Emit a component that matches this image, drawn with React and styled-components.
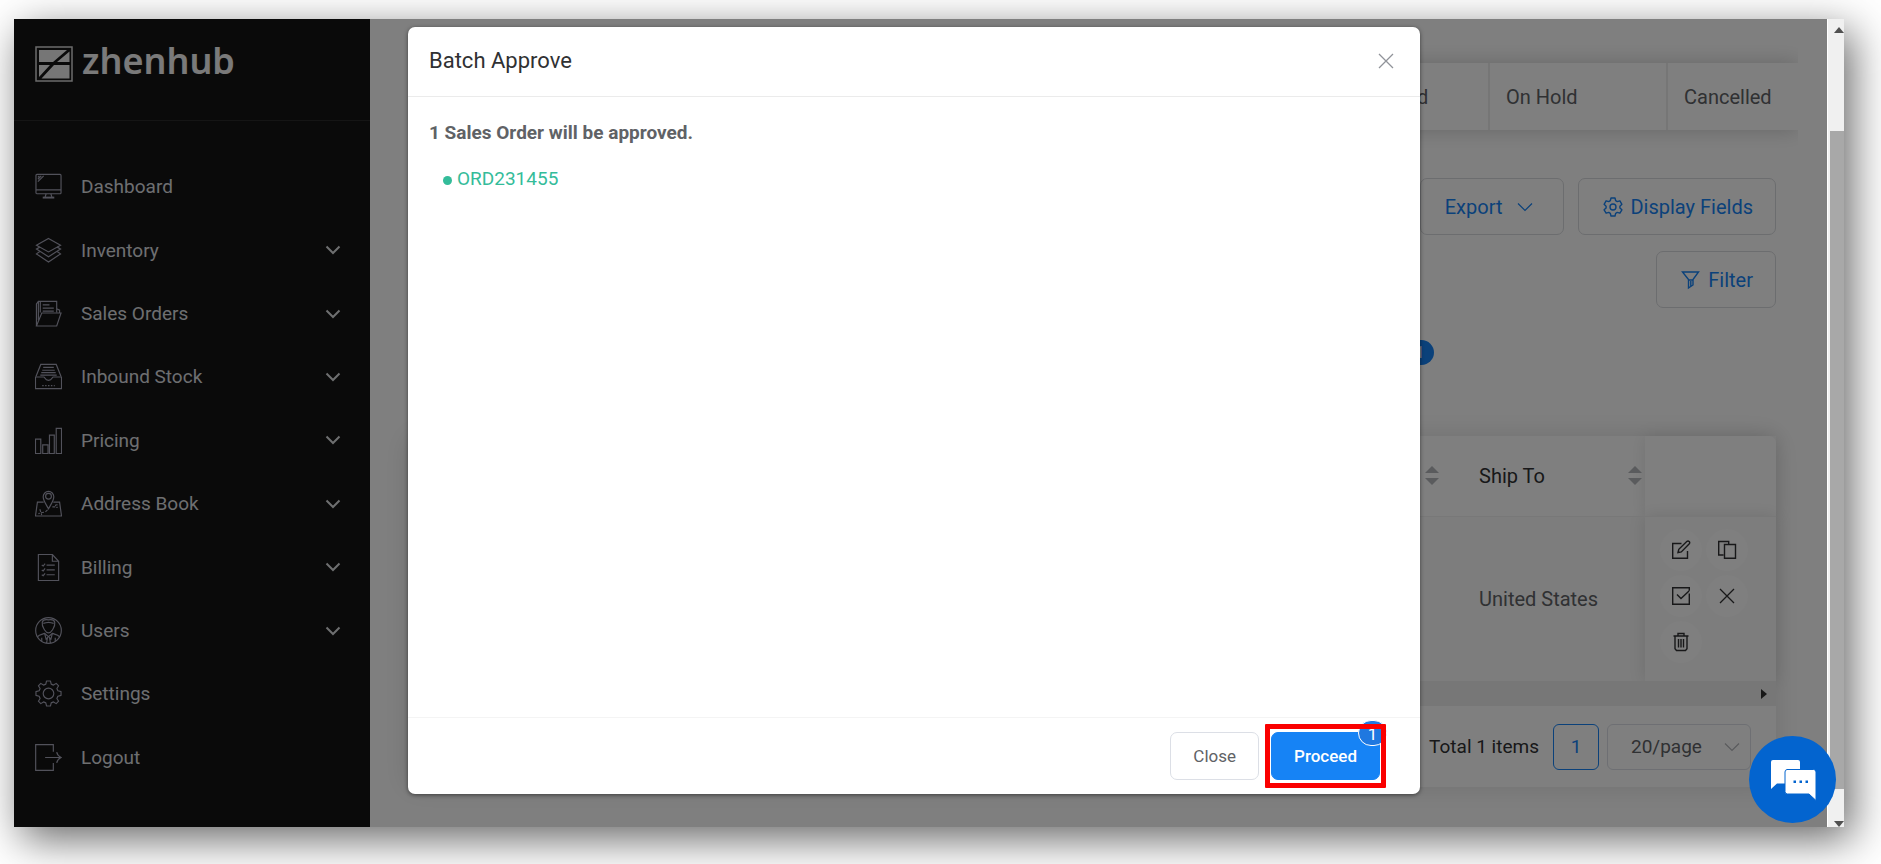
import React from "react";
import styled, { createGlobalStyle } from "styled-components";

const iconProps = {
  width: 27,
  height: 27,
  viewBox: "0 0 28 28",
  fill: "none",
  stroke: "currentColor",
  strokeWidth: 1.2,
  "aria-hidden": true,
};

const DashboardIcon = () => (
  <svg {...iconProps}>
    <rect x="1" y="1.5" width="26" height="20" rx="1" />
    <path d="M1 17.5h26M11.5 21.5l-1 3.5M16.5 21.5l1 3.5" />
    <path d="M3 9l6-6M3 6.5L6.500 3M3 4.500L4.500 3" />
    <path d="M8 25.500h12" strokeWidth="2" />
  </svg>
);

const InventoryIcon = () => (
  <svg {...iconProps}>
    <path d="M14 1.500L26.500 8.500 14 15.500 1.500 8.500z" />
    <path d="M5 10.500L1.500 12.500 14 20.500l12.500-8-3.500-2" />
    <path d="M5 15L1.500 17.500 14 26l12.500-8.500L23 15" />
  </svg>
);

const SalesIcon = () => (
  <svg {...iconProps}>
    <path d="M1.500 27L7 13.500h20L22.500 27z" />
    <path d="M5.500 13V1.500h17V13M22.500 9l3 1.500v3M1.500 27V4l2-2.500h2M3.500 2v19" />
    <path d="M8 5h7M8 8.500h11.500M8 11.500h11.500" />
  </svg>
);

const InboundIcon = () => (
  <svg {...iconProps}>
    <path d="M.5 14.500h8.500c1.500 0 1 3.500 5 3.500s3.500-3.500 5-3.500h8.500v12H.5z" />
    <path d="M1 14L6 1.500h16L27 14" />
    <path d="M8.500 4.500h11M7.500 7.500h13M6.500 10h15M5.500 12.500h17" />
    <path d="M7.500 23.500h13" strokeDasharray="1.500 1.500" />
  </svg>
);

const PricingIcon = () => (
  <svg {...iconProps}>
    <path d="M.5 12.500H6v15H.5zM8 18.500h5.500v9H8zM15 8.500h5v19h-5zM22 1.500h5.500v26H22z" />
  </svg>
);

const AddressIcon = () => (
  <svg {...iconProps}>
    <path d="M14 19.500C11 14 8.500 11 8.500 7a5.500 5.500 0 0 1 11 0c0 4-2.500 7-5.500 12.500z" />
    <circle cx="14" cy="6.500" r="3" />
    <path d="M9 12.500H2.500L.5 27h27l-2-14.500H19" />
    <path d="M23.500 15.500c-3-1-3 3 0 2.500M18 17.500h3M13 20.500c-3 4-6 2-7.500 3.500l-2 .5M5 20l2 6" strokeDasharray="3 1.500" />
  </svg>
);

const BillingIcon = () => (
  <svg {...iconProps}>
    <path d="M3.500.5H18l6.500 7v20h-21zM18 .5v7h6.500" />
    <path d="M12 11.500h8.500M12 16.500h8.500M12 21.500h8.500M7 11.500l1.500 1L10.500 10M7 16.500l1.500 1 2-2.500M7 21.500l1.500 1 2-2.500" />
  </svg>
);

const UsersIcon = () => (
  <svg {...iconProps}>
    <circle cx="14" cy="14" r="13.300" />
    <path d="M7.500 5.500C8 3 11 2.500 14 3c3-.5 6 0 6.500 2.500.5 4.500-1.500 6-2.500 8-1.500 2.500-2 3-4 3s-2.500-.5-4-3c-1-2-3-3.500-2.500-8z" />
    <path d="M8.500 6.500c2 0 3.500-1 5.500-1s3.500 1 5.500 1M2.500 20.500c2-2.500 5-2.500 7.500-3.500l4 3.500 4-3.500c2.500 1 5.500 1 7.500 3.500" />
    <path d="M10 17l1.500 6 2-2M18 17l-1.500 6-2-2M13 21l-1 6M15 21l1 6M7 21.500V25M21 21.500V25" />
  </svg>
);

const SettingsIcon = () => (
  <svg {...iconProps}>
    <circle cx="14" cy="14" r="5.500" />
    <path d="M12 1h4l.8 3.300 2.400 1L22 3.500 24.500 6l-1.800 2.800 1 2.400L27 12v4l-3.300.8-1 2.400 1.800 2.800-2.500 2.500-2.800-1.800-2.400 1L16 27h-4l-.8-3.300-2.400-1L6 24.500 3.500 22l1.800-2.800-1-2.400L1 16v-4l3.300-.8 1-2.400L3.500 6 6 3.500l2.800 1.800 2.400-1z" strokeLinejoin="round" />
  </svg>
);

const LogoutIcon = () => (
  <svg {...iconProps}>
    <path d="M19 8V.7H.7v26.600H19v-7.500M10.500 14H27M22.500 8.500C23 11.500 25 13 27 14c-2 1-4 2.500-4.500 5.500" />
  </svg>
);

const Chevron = () => (
  <svg width="16" height="16" viewBox="0 0 16 16" fill="none" stroke="currentColor" strokeWidth="2" aria-hidden>
    <path d="M1.500 4.500L8 11l6.500-6.500" />
  </svg>
);

const ThinChevron = () => (
  <svg width="16" height="16" viewBox="0 0 16 16" fill="none" stroke="currentColor" strokeWidth="1.200" aria-hidden>
    <path d="M1 4.500l7 7 7-7" />
  </svg>
);

const CrossIcon = () => (
  <svg width="16" height="16" viewBox="0 0 16 16" fill="none" stroke="currentColor" strokeWidth="1.300" aria-hidden>
    <path d="M1 1l14 14M15 1L1 15" />
  </svg>
);

const toolProps = {
  width: 20,
  height: 20,
  viewBox: "0 0 20 20",
  fill: "none",
  stroke: "currentColor",
  strokeWidth: 1.4,
  "aria-hidden": true,
};

const GearIcon = () => (
  <svg {...toolProps}>
    <circle cx="10" cy="10" r="3" />
    <path d="M8 1h4l.7 2.700 1.500.9 2.700-.8 2 3.500-2 1.900v1.700l2 1.900-2 3.400-2.700-.8-1.500.9L12 19H8l-.7-2.700-1.500-.9-2.700.8-2-3.400 2-1.900V9.200l-2-1.900 2-3.500 2.700.8 1.500-.9z" strokeLinejoin="round" />
  </svg>
);

const FilterIcon = () => (
  <svg {...toolProps}>
    <path d="M1.500 2h16L12 9.500V15l-4.500 3V9.500zM7.500 10h4.500M9.800 11v5" />
  </svg>
);

const EditIcon = () => (
  <svg {...toolProps}>
    <path d="M10.500 3.500H1.700v14.800h14.800V11" />
    <path d="M7 12.500l.8-3.200 8.200-8c1.500-1 3.500.8 2.300 2.400l-8 8.200z" />
  </svg>
);

const CopyIcon = () => (
  <svg {...toolProps}>
    <path d="M6.500 15H1.700V1.500h10V4M7.500 4.500h11v13.800h-11z" />
  </svg>
);

const ApproveIcon = () => (
  <svg {...toolProps}>
    <path d="M18.300 7.500v10.800H1.700V1.700h16.600v3M6 8.500l4 4 8-7.500" />
  </svg>
);

const TrashIcon = () => (
  <svg {...toolProps}>
    <path d="M2.500 4h15M7 3.500v-2h6v2M4 4.500v12.300l1.500 1.700h9l1.500-1.700V4.500M7.500 7v8.500M10 7v8.500M12.500 7v8.500" />
  </svg>
);

const LogoMark = () => (
  <svg width="38" height="36" viewBox="0 0 38 36" aria-hidden>
    <rect x="1" y="1" width="36" height="34" fill="none" stroke="#d8d8d8" strokeWidth="1.500" />
    <path d="M4 4h28L18 16H4zM34.500 5.500V16H22zM4 19h11L4 31zM19 19h15.500v13.500H6.500z" fill="#ececec" />
  </svg>
);

const ChatIcon = () => (
  <svg width="46" height="42" viewBox="0 0 46 42" aria-hidden>
    <path d="M3 1h25a2 2 0 0 1 2 2v21.500H7L1 30V3a2 2 0 0 1 2-2z" fill="#fff" />
    <path d="M17 10.500h26.500a2.500 2.500 0 0 1 2.500 2.500v28.500l-7-6.500H17.500a2.500 2.500 0 0 1-2.500-2.500V13a2.500 2.500 0 0 1 2-2.500z" fill="#fff" stroke="#0364cf" />
    <path d="M23.500 21.500h2.500v2.500h-2.500zM29.500 21.500H32v2.500h-2.500zM35.500 21.500H38v2.500h-2.500z" fill="#0364cf" />
  </svg>
);

const menu = [
  { label: "Dashboard", Icon: DashboardIcon },
  { label: "Inventory", Icon: InventoryIcon, nested: true },
  { label: "Sales Orders", Icon: SalesIcon, nested: true },
  { label: "Inbound Stock", Icon: InboundIcon, nested: true },
  { label: "Pricing", Icon: PricingIcon, nested: true },
  { label: "Address Book", Icon: AddressIcon, nested: true },
  { label: "Billing", Icon: BillingIcon, nested: true },
  { label: "Users", Icon: UsersIcon, nested: true },
  { label: "Settings", Icon: SettingsIcon },
  { label: "Logout", Icon: LogoutIcon },
];

const actions = [
  { label: "Edit", Icon: EditIcon },
  { label: "Copy", Icon: CopyIcon },
  { label: "Approve", Icon: ApproveIcon },
  { label: "Cancel", Icon: CrossIcon },
  { label: "Delete", Icon: TrashIcon },
];

const SideMenu = () => (
  <StyledSidebar>
    <StyledLogo>
      <LogoMark />
      <span>zhenhub</span>
    </StyledLogo>
    <StyledNav>
      {menu.map(({ label, Icon, nested }) => (
        <StyledNavItem key={label} href="#">
          <Icon />
          <span>{label}</span>
          {nested && <Chevron />}
        </StyledNavItem>
      ))}
    </StyledNav>
  </StyledSidebar>
);

const OrdersTable = () => (
  <StyledCard>
    <StyledTable>
      <thead>
        <tr>
          <StyledTh>
            <StyledSort>
              <span />
              <StyledCarets />
            </StyledSort>
          </StyledTh>
          <StyledTh $width={203}>
            <StyledSort>
              Ship To
              <StyledCarets />
            </StyledSort>
          </StyledTh>
          <StyledTh $width={131} $fixed />
        </tr>
      </thead>
      <tbody>
        <tr>
          <StyledTd />
          <StyledTd>United States</StyledTd>
          <StyledTd $fixed>
            <StyledActions>
              {actions.map(({ label, Icon }) => (
                <button key={label} type="button" aria-label={label}>
                  <Icon />
                </button>
              ))}
            </StyledActions>
          </StyledTd>
        </tr>
      </tbody>
    </StyledTable>
    <StyledTrack>
      <StyledArrow $dir="right" />
    </StyledTrack>
    <StyledPagination>
      <span>Total 1 items</span>
      <StyledPage type="button">1</StyledPage>
      <StyledSelect>
        <select aria-label="Page size" defaultValue="20">
          <option value="20">20/page</option>
        </select>
        <ThinChevron />
      </StyledSelect>
    </StyledPagination>
  </StyledCard>
);

const BatchApproveModal = () => (
  <StyledModal role="dialog" aria-labelledby="modal-title">
    <StyledModalHeader>
      <h2 id="modal-title">Batch Approve</h2>
      <button type="button" aria-label="Close dialog">
        <CrossIcon />
      </button>
    </StyledModalHeader>
    <StyledModalBody>
      <strong>1 Sales Order will be approved.</strong>
      <ul>
        <li>
          <a href="#">ORD231455</a>
        </li>
      </ul>
    </StyledModalBody>
    <StyledModalFooter>
      <StyledButton type="button">Close</StyledButton>
      <StyledHighlight>
        <StyledButton type="button" $primary>
          Proceed
        </StyledButton>
        <StyledCount>1</StyledCount>
      </StyledHighlight>
    </StyledModalFooter>
  </StyledModal>
);

const App = () => {
  return (
    <StyledRoot>
      <GlobalStyle />
      <StyledWindow>
        <SideMenu />
        <StyledMain>
          <StyledTabs>
            <a href="#">Dispatched</a>
            <a href="#">On Hold</a>
            <a href="#">Cancelled</a>
          </StyledTabs>
          <StyledToolbar>
            <StyledTool type="button">
              <span>Export</span>
              <ThinChevron />
            </StyledTool>
            <StyledTool type="button">
              <GearIcon />
              <span>Display Fields</span>
            </StyledTool>
          </StyledToolbar>
          <StyledToolbar>
            <StyledTool type="button">
              <FilterIcon />
              <span>Filter</span>
            </StyledTool>
          </StyledToolbar>
          <StyledSelection>
            <span>1</span>
          </StyledSelection>
          <OrdersTable />
        </StyledMain>
        <StyledMask>
          <BatchApproveModal />
        </StyledMask>
        <StyledScrollbar>
          <StyledArrow $dir="up" />
          <StyledThumb />
          <StyledArrow $dir="down" />
        </StyledScrollbar>
        <StyledChat type="button" aria-label="Open chat">
          <ChatIcon />
        </StyledChat>
      </StyledWindow>
    </StyledRoot>
  );
};

export default App;

const GlobalStyle = createGlobalStyle`
  *, *::before, *::after {
    box-sizing: border-box;
  }

  body {
    margin: 0;
    background-color: #ffffff;
    font-family: Roboto, "Liberation Sans", sans-serif;
    font-size: 20px;
    color: #303133;
  }

  a {
    color: inherit;
    text-decoration: none;
  }

  button, select {
    padding: 0;
    border: 0;
    background: none;
    font: inherit;
    color: inherit;
    cursor: pointer;
  }

  svg {
    flex: none;
  }
`;

const StyledRoot = styled.div`
  display: flex;
  min-height: 100vh;
  padding: 19px 37px 37px 14px;
  overflow: hidden;
`;

const StyledWindow = styled.div`
  position: relative;
  flex: 1;
  display: flex;
  min-width: 0;
  background-color: #ffffff;
  box-shadow: 8px 12px 40px rgba(0, 0, 0, 0.6);
`;

const StyledSidebar = styled.aside`
  flex: none;
  display: flex;
  flex-direction: column;
  width: 356px;
  background-color: #141414;
  color: #dcdee0;
  font-size: 19px;
`;

const StyledLogo = styled.div`
  display: flex;
  align-items: flex-start;
  gap: 9px;
  height: 102px;
  padding: 27px 21px 0;
  border-bottom: 1px solid #2a2a2a;
  color: #f4f4f4;

  & > span {
    font-family: "Noto Sans", sans-serif;
    font-size: 36px;
    font-weight: 600;
    line-height: 30px;
  }
`;

const StyledNav = styled.nav`
  flex: 1;
  display: flex;
  flex-direction: column;
  padding: 34px 29px 38px 21px;
`;

const StyledNavItem = styled.a`
  flex: 1;
  display: flex;
  align-items: center;
  gap: 19px;

  & > svg:first-child {
    color: #a4a4b6;
  }

  & > span {
    flex: 1;
  }
`;

const StyledMain = styled.main`
  flex: 1;
  display: flex;
  flex-direction: column;
  min-width: 0;
  padding: 44px 51px 0 38px;
`;

const StyledTabs = styled.div`
  display: flex;
  justify-content: flex-end;
  margin: 0 -22px 48px 0;
  box-shadow: 0 0 20px rgba(0, 0, 0, 0.2);
  clip-path: inset(-24px 0);
  color: #606266;

  & > a {
    width: 178px;
    height: 67px;
    padding-left: 16px;
    border-left: 2px solid #ececec;
    line-height: 68px;
  }

  & > a:last-child {
    width: 132px;
  }
`;

const StyledToolbar = styled.div`
  display: flex;
  justify-content: flex-end;
  gap: 14px;
  margin-bottom: 16px;
`;

const StyledTool = styled.button`
  display: flex;
  align-items: center;
  gap: 7px;
  height: 57px;
  padding: 0 22px 0 24px;
  border: 1px solid #d8dade;
  border-radius: 7px;
  color: #1683f5;

  & > svg:last-child {
    margin: 0 8px;
  }
`;

const StyledSelection = styled.div`
  display: flex;
  justify-content: flex-end;
  padding: 16px 342px 71px 0;

  & > span {
    width: 28px;
    height: 25px;
    border-radius: 13px;
    background-color: #1683f5;
    color: #ffffff;
    font-size: 16px;
    line-height: 25px;
    text-align: center;
  }
`;

const StyledCard = styled.section`
  border-radius: 7px 7px 0 0;
  box-shadow: 0 0 28px rgba(0, 0, 0, 0.12);
`;

const StyledTable = styled.table`
  width: 100%;
  table-layout: fixed;
  border-collapse: collapse;
`;

const StyledTh = styled.th`
  width: ${({ $width }) => ($width ? `${$width}px` : "auto")};
  height: 80px;
  padding: 0 3px 0 37px;
  border-bottom: 1px solid #f0f0f0;
  box-shadow: ${({ $fixed }) => ($fixed ? "0 0 16px rgba(0, 0, 0, 0.1)" : "none")};
  font-weight: 400;
  text-align: left;
`;

const StyledTd = styled.td`
  height: 165px;
  padding: ${({ $fixed }) => ($fixed ? "0 0 6px 15px" : "0 0 0 37px")};
  background-color: #fafafa;
  box-shadow: ${({ $fixed }) => ($fixed ? "0 0 16px rgba(0, 0, 0, 0.12)" : "none")};
  color: #606266;
`;

const StyledSort = styled.div`
  display: flex;
  align-items: center;
  justify-content: space-between;
`;

const StyledCarets = styled.span`
  display: flex;
  flex-direction: column;
  gap: 5px;

  &::before,
  &::after {
    content: "";
    border: 7px solid transparent;
  }

  &::before {
    border-top: 0;
    border-bottom-color: #b4b6ba;
  }

  &::after {
    border-bottom: 0;
    border-top-color: #b4b6ba;
  }
`;

const StyledActions = styled.div`
  display: flex;
  flex-wrap: wrap;
  gap: 4px;

  & > button {
    display: grid;
    place-items: center;
    width: 42px;
    height: 42px;
    border-radius: 50%;
    background-color: #fefefe;
    color: #303133;
  }
`;

const StyledTrack = styled.div`
  display: flex;
  align-items: center;
  justify-content: flex-end;
  height: 25px;
  padding-right: 9px;
  background-color: #eeeeee;
`;

const StyledPagination = styled.div`
  display: flex;
  align-items: center;
  justify-content: flex-end;
  height: 81px;
  padding-right: 25px;
  font-size: 19px;

  & > span {
    margin-right: 14px;
  }
`;

const StyledPage = styled.button`
  width: 46px;
  height: 46px;
  margin-right: 8px;
  border: 1px solid #1683f5;
  border-radius: 6px;
  color: #1683f5;
`;

const StyledSelect = styled.div`
  position: relative;
  display: flex;
  align-items: center;
  width: 144px;
  height: 46px;
  border: 1px solid #dcdfe6;
  border-radius: 6px;
  color: #606266;

  & > select {
    width: 100%;
    height: 100%;
    padding-left: 23px;
    appearance: none;
  }

  & > svg {
    position: absolute;
    right: 10px;
    color: #b4b6ba;
    pointer-events: none;
  }
`;

const StyledArrow = styled.span`
  width: 0;
  height: 0;
  border: 5px solid transparent;
  ${({ $dir }) => $dir === "right" && "border-left: 6px solid #303030; border-right: 0;"}
  ${({ $dir }) => $dir === "up" && "border-bottom: 6px solid #505050; border-top: 0;"}
  ${({ $dir }) => $dir === "down" && "border-top: 6px solid #505050; border-bottom: 0;"}
`;

const StyledMask = styled.div`
  position: absolute;
  inset: 0;
  display: flex;
  padding: 8px 424px 33px 394px;
  background-color: rgba(0, 0, 0, 0.5);
`;

const StyledModal = styled.div`
  flex: 1;
  display: flex;
  flex-direction: column;
  border-radius: 7px;
  background-color: #ffffff;
  box-shadow: 0 1px 4px rgba(0, 0, 0, 0.5);
`;

const StyledModalHeader = styled.header`
  display: flex;
  align-items: center;
  justify-content: space-between;
  height: 70px;
  padding: 0 26px 2px 21px;
  border-bottom: 1px solid #ebebeb;

  & > h2 {
    margin: 0;
    color: #303133;
    font-size: 22px;
    font-weight: 400;
  }

  & > button {
    display: flex;
    color: #909399;
  }
`;

const StyledModalBody = styled.div`
  flex: 1;
  padding: 24px 21px;
  color: #606266;
  font-size: 19px;
  line-height: 24px;

  & > strong {
    font-weight: 700;
  }

  & > ul {
    margin: 22px 0 0;
    padding: 0 0 0 14px;
    color: #34bc9a;
    list-style: none;
  }

  & li {
    display: flex;
    align-items: center;
    gap: 5px;
  }

  & li::before {
    content: "";
    width: 9px;
    height: 9px;
    margin-top: 3px;
    border-radius: 50%;
    background-color: currentColor;
  }
`;

const StyledModalFooter = styled.footer`
  display: flex;
  align-items: center;
  justify-content: flex-end;
  gap: 6px;
  height: 77px;
  padding: 0 34px 1px 0;
  border-top: 1px solid #f4f4f4;
`;

const StyledButton = styled.button`
  height: 48px;
  padding: 0 22px;
  border: 1px solid ${({ $primary }) => ($primary ? "#1683f5" : "#dcdfe6")};
  border-radius: 7px;
  background-color: ${({ $primary }) => ($primary ? "#1683f5" : "#ffffff")};
  color: ${({ $primary }) => ($primary ? "#ffffff" : "#606266")};
  font-size: 17px;
  font-weight: ${({ $primary }) => ($primary ? 500 : 400)};
`;

const StyledHighlight = styled.div`
  position: relative;
  display: flex;
  padding: 8px 6px;

  &::after {
    content: "";
    position: absolute;
    inset: 0;
    border: 5px solid #fa0000;
    border-radius: 1px;
    pointer-events: none;
  }
`;

const StyledCount = styled.span`
  position: absolute;
  top: -4px;
  right: -1px;
  width: 29px;
  height: 26px;
  border: 1px solid #ffffff;
  border-radius: 13px;
  background-color: #1f78e0;
  color: #ffffff;
  font-size: 17px;
  line-height: 26px;
  text-align: center;
`;

const StyledScrollbar = styled.div`
  position: relative;
  flex: none;
  display: flex;
  flex-direction: column;
  align-items: flex-end;
  width: 17px;
  padding: 8px 0 0 2px;
  border-left: 1px solid #ffffff;
  background-color: #f0f0f0;
`;

const StyledThumb = styled.div`
  flex: 1;
  width: 100%;
  margin: 98px 0 32px;
  background-color: #a8a8a8;
`;

const StyledChat = styled.button`
  position: absolute;
  right: 8px;
  bottom: 4px;
  display: grid;
  place-items: center;
  width: 87px;
  height: 87px;
  border-radius: 50%;
  background-color: #0364cf;
`;
